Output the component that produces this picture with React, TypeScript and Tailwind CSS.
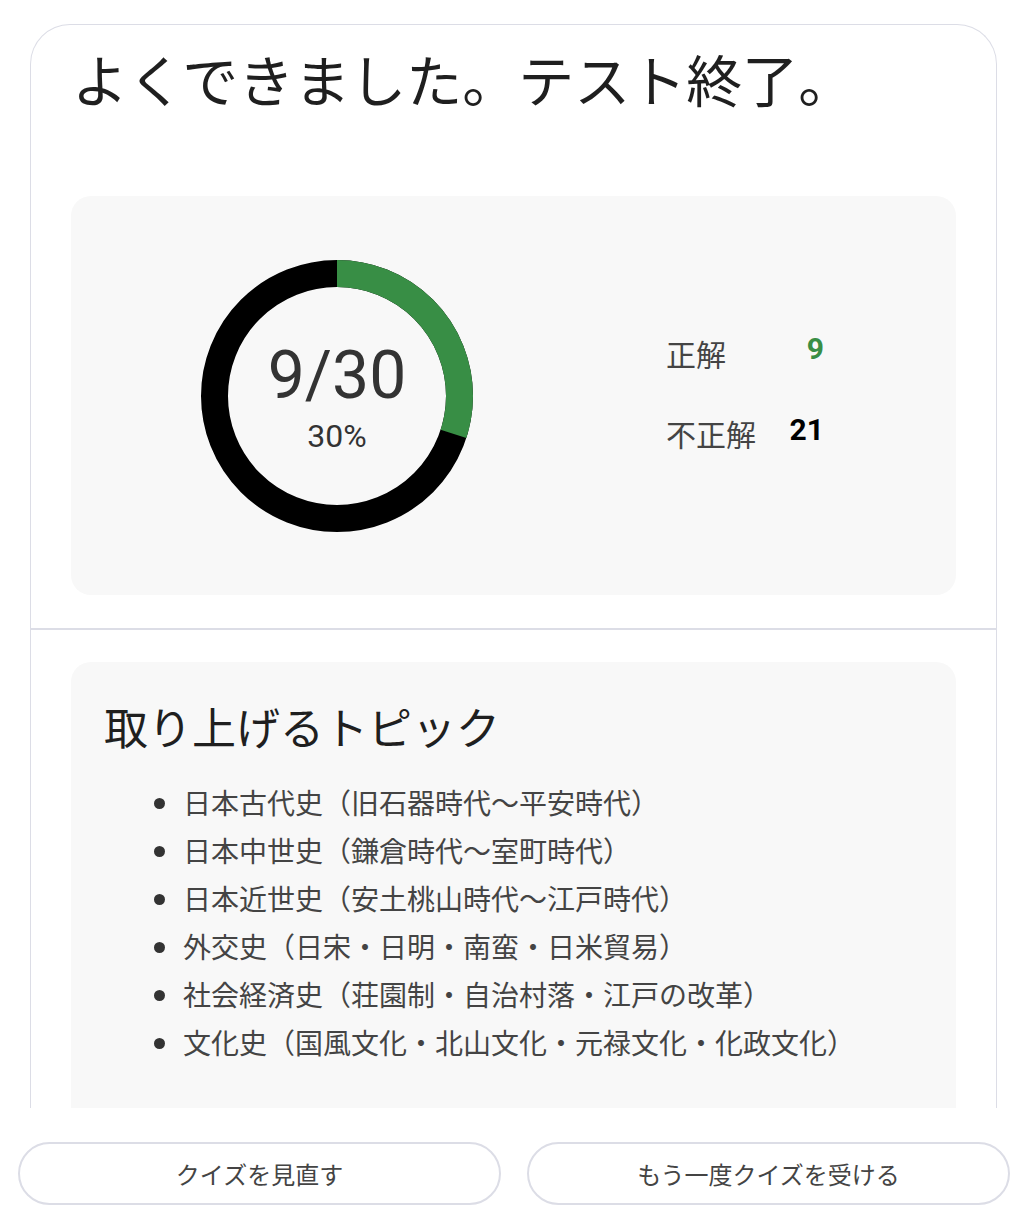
import React from 'react';

const topics = [
  '日本古代史（旧石器時代〜平安時代）',
  '日本中世史（鎌倉時代〜室町時代）',
  '日本近世史（安土桃山時代〜江戸時代）',
  '外交史（日宋・日明・南蛮・日米貿易）',
  '社会経済史（荘園制・自治村落・江戸の改革）',
  '文化史（国風文化・北山文化・元禄文化・化政文化）',
];

const Donut: React.FC<{ correct: number; total: number }> = ({ correct, total }) => {
  const r = 122.5;
  const c = 2 * Math.PI * r;
  const frac = correct / total;
  return (
    <div className="relative w-[272px] h-[272px] shrink-0">
      <svg width="272" height="272" viewBox="0 0 272 272" className="-rotate-90">
        <circle cx="136" cy="136" r={r} fill="none" stroke="#000000" strokeWidth="27" />
        <circle
          cx="136"
          cy="136"
          r={r}
          fill="none"
          stroke="#388e45"
          strokeWidth="27"
          strokeDasharray={`${c * frac} ${c}`}
        />
      </svg>
      <div className="absolute inset-0 flex flex-col items-center justify-center">
        <span className="text-[66px] leading-none text-[#333] font-['Roboto',sans-serif] mt-[4px]">
          {correct}/{total}
        </span>
        <span className="text-[32px] leading-none text-[#333] font-['Roboto',sans-serif] mt-[11px]">
          {Math.round(frac * 100)}%
        </span>
      </div>
    </div>
  );
};

export default function App() {
  return (
    <div className="w-[1028px] h-[1228px] bg-white flex flex-col font-['Noto_Sans_CJK_JP','Noto_Sans',sans-serif] text-[#1f1f1f]">
      <div className="h-[1108px] overflow-hidden pt-[24px] pl-[30px] pr-[31px]">
        <div className="border border-[#dcdde6] rounded-t-[40px] border-b-0">
          <h1 className="pl-[41px] pt-[18px] text-[56px] leading-[70px] font-normal">
            よくできました。テスト終了。
          </h1>
          <div className="px-[40px] pt-[83px] pb-[33px]">
            <div className="bg-[#f8f8f8] rounded-[20px] h-[399px] flex items-center pl-[130px]">
              <Donut correct={9} total={30} />
              <div className="ml-[193px] flex flex-col gap-[36px] mt-[-6px]">
                <div className="flex items-center w-[158px] justify-between">
                  <span className="text-[30px] leading-[44px] text-[#444]">正解</span>
                  <span className="text-[30px] leading-[44px] font-bold text-[#388e45] font-['Roboto',sans-serif] mt-[-8px]">9</span>
                </div>
                <div className="flex items-center w-[158px] justify-between">
                  <span className="text-[30px] leading-[44px] text-[#444]">不正解</span>
                  <span className="text-[30px] leading-[44px] font-bold text-black font-['Roboto',sans-serif] mt-[-6px]">21</span>
                </div>
              </div>
            </div>
          </div>
          <div className="border-t-2 border-[#dcdde6] px-[40px] pt-[32px]">
            <div className="bg-[#f8f8f8] rounded-t-[20px] pl-[33px] pt-[34px] pb-[60px]">
              <h2 className="text-[44px] leading-[60px] font-normal mb-[22px]">取り上げるトピック</h2>
              <ul className="list-disc pl-[78px] text-[28px] leading-[48px] text-[#444] marker:text-[#333]">
                {topics.map((t) => (
                  <li key={t} className="pl-[1px]">{t}</li>
                ))}
              </ul>
            </div>
          </div>
        </div>
      </div>
      <div className="flex-1 flex gap-[26px] px-[18px] pt-[34px]">
        <button className="flex-1 h-[63px] rounded-full border-2 border-[#dcdde6] bg-white text-[24px] text-[#444]">
          クイズを見直す
        </button>
        <button className="flex-1 h-[63px] rounded-full border-2 border-[#dcdde6] bg-white text-[24px] text-[#444]">
          もう一度クイズを受ける
        </button>
      </div>
    </div>
  );
}
